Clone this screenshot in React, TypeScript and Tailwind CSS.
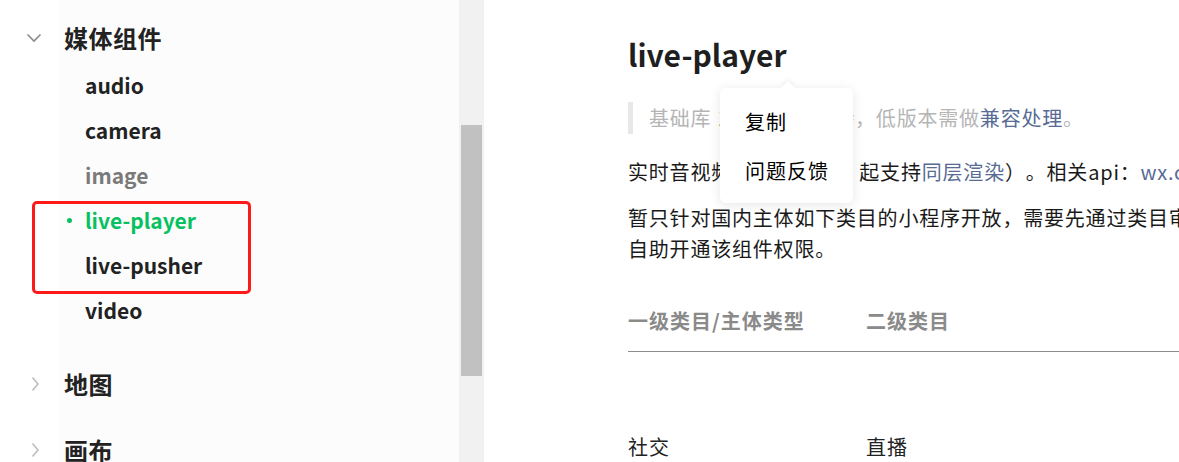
import React from "react"

const cjk = "font-['Noto_Sans_CJK_SC','Noto_Sans',sans-serif] [text-spacing-trim:space-all]"

function ChevronDown() {
    return (
        <svg width="16" height="10" viewBox="0 0 16 10" className="shrink-0">
            <path d="M1.5 1.5 L8 8 L14.5 1.5" fill="none" stroke="#8a8a8a" strokeWidth="1.6" />
        </svg>
    )
}

function ChevronRight() {
    return (
        <svg width="8" height="16" viewBox="0 0 8 16" className="shrink-0">
            <path d="M1.5 1.5 L7 8 L1.5 14.5" fill="none" stroke="#bdbdbd" strokeWidth="1.6" />
        </svg>
    )
}

function Item({ label, muted, active }: { label: string; muted?: boolean; active?: boolean }) {
    return (
        <div className="h-[45px] flex items-center relative">
            {active && <span className="absolute left-[67px] top-[20px] w-[5px] h-[5px] rounded-full bg-[#07c160]" />}
            <span
                className={
                    "pl-[85px] text-[21px] font-bold " +
                    (active ? "text-[#07c160]" : muted ? "text-[#7a7a7a]" : "text-[#222]")
                }
            >
                {label}
            </span>
        </div>
    )
}

export default function App() {
    return (
        <div className={"w-[1179px] h-[462px] overflow-hidden flex bg-white " + cjk}>
            {/* sidebar */}
            <div className="w-[459px] shrink-0 h-full bg-[linear-gradient(to_right,#ffffff_58px,#fcfcfc_58px)] pt-[13px]">
                <div className="h-[50px] flex items-center">
                    <span className="pl-[26px] w-[64px]"><ChevronDown /></span>
                    <span className="text-[24px] font-bold text-[#222] tracking-[0.5px]">媒体组件</span>
                </div>
                <Item label="audio" />
                <Item label="camera" />
                <Item label="image" muted />
                <div className="relative">
                    <Item label="live-player" active />
                    <Item label="live-pusher" />
                    <div className="absolute left-[32px] top-[3px] w-[219px] bottom-[-6px] border-[3px] border-[#ff1a1a] rounded-[5px]" />
                </div>
                <Item label="video" />
                <div className="h-[50px] flex items-center mt-[26px]">
                    <span className="pl-[31px] w-[64px]"><ChevronRight /></span>
                    <span className="text-[24px] font-bold text-[#222] tracking-[0.5px]">地图</span>
                </div>
                <div className="h-[50px] flex items-center mt-[16px]">
                    <span className="pl-[31px] w-[64px]"><ChevronRight /></span>
                    <span className="text-[24px] font-bold text-[#222] tracking-[0.5px]">画布</span>
                </div>
            </div>

            {/* scrollbar */}
            <div className="w-[25px] shrink-0 h-full bg-[#f1f1f1] pt-[125px] pl-[2px] pr-[2px]">
                <div className="h-[251px] bg-[#c1c1c1]" />
            </div>

            {/* content */}
            <div className="flex-1 relative pl-[144px] text-[#1a1a1a] whitespace-nowrap">
                <h1 className="mt-[34px] h-[40px] leading-[40px] text-[30px] font-bold text-[#1f1f1f]">live-player</h1>

                <div className="mt-[28px] h-[32px] flex items-center border-l-[5px] border-[#e8e8e8] pl-[16px] text-[20px] tracking-[0.8px] text-[#b5b5b5]">
                    基础库 <span className="text-[#e39a4a] mx-[6px]">1.7.0</span> 开始支持，低版本需做<span className="text-[#576b95]">兼容处理</span>。
                </div>

                <p className="mt-[22px] leading-[31px] text-[20px] tracking-[0.8px]">
                    实时音视频播放（v2.9.1 起支持<span className="text-[#576b95]">同层渲染</span>）。相关api：<span className="text-[#576b95]">wx.createLivePlayerContext</span>
                </p>

                <p className="mt-[15px] leading-[31px] text-[20px] tracking-[0.8px]">
                    暂只针对国内主体如下类目的小程序开放，需要先通过类目审核，再在小程序管理后台，「开发」-「接口设置」中
                    <br />
                    自助开通该组件权限。
                </p>

                <div className="mt-[26px] text-[20px] tracking-[1px]">
                    <div className="flex h-[62px] items-center border-b border-[#8c8c8c] font-bold text-[#8a8a8a]">
                        <div className="w-[238px]">一级类目/主体类型</div>
                        <div>二级类目</div>
                    </div>
                    <div className="flex h-[190px] items-center text-[#222]">
                        <div className="w-[238px]">社交</div>
                        <div>直播</div>
                    </div>
                </div>

                {/* context menu */}
                <div className="absolute left-[236px] top-[88px] w-[133px] h-[115px] bg-white rounded-[6px] shadow-[0_2px_12px_rgba(0,0,0,0.1)] pt-[9px] text-[20px] text-black">
                    <div className="absolute left-[63px] top-[-5px] w-[10px] h-[10px] bg-white rotate-45 shadow-[-2px_-2px_5px_rgba(0,0,0,0.05)]" />
                    <div className="relative h-[49px] flex items-center pl-[25px] tracking-[1px]">复制</div>
                    <div className="relative h-[49px] flex items-center pl-[25px] tracking-[1px]">问题反馈</div>
                </div>
            </div>
        </div>
    )
}
